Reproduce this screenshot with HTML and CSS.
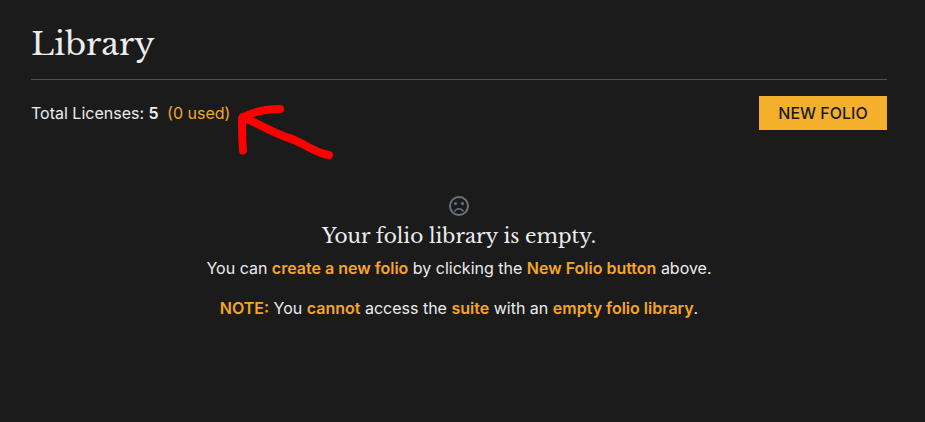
FILE: index.html
```html
<!DOCTYPE html>
<html lang="en">
<head>
<meta charset="utf-8">
<title>Library</title>
<link rel="stylesheet" href="styles.css">
</head>
<body>
<main class="page">
  <h1 class="title">Library</h1>
  <div class="toolbar">
    <p class="licenses">Total Licenses: <b>5</b> <span class="used">(0 used)</span></p>
    <button class="new-folio">NEW FOLIO</button>
  </div>
  <section class="empty">
    <svg class="face" viewBox="0 0 24 24" fill="currentColor" aria-hidden="true">
      <circle cx="12" cy="12" r="9" fill="none" stroke="currentColor" stroke-width="2"/>
      <circle cx="8.5" cy="9.5" r="1.5"/>
      <circle cx="15.5" cy="9.5" r="1.5"/>
      <path d="M12 14c-2.33 0-4.32 1.45-5.12 3.5h1.67c.69-1.19 1.97-2 3.45-2s2.75.81 3.45 2h1.67c-.8-2.05-2.79-3.5-5.12-3.5z"/>
    </svg>
    <h2 class="subtitle">Your folio library is empty.</h2>
    <p class="line">You can <b>create a new folio</b> by clicking the <b>New Folio button</b> above.</p>
    <p class="line note"><b>NOTE:</b> You <b>cannot</b> access the <b>suite</b> with an <b>empty folio library</b>.</p>
  </section>
</main>
<svg class="arrow" viewBox="230 95 110 70" aria-hidden="true">
  <path d="M243 150.500C242 140 242 128 242 118C252 112 264 109 280 109"/>
  <path d="M243 117C255 122 271 132 286 137C302 141 313 153 329 155"/>
</svg>
</body>
</html>
```
FILE: styles.css
```css
* { box-sizing: border-box; margin: 0; padding: 0; }
body {
  background: #1b1b1b;
  color: #ececec;
  font: 16px/24px Inter, "Liberation Sans", sans-serif;
}
.page { padding: 20px 38px 0 31px; }
.title {
  height: 60px;
  border-bottom: 1px solid #505050;
  font: 400 32px/48px "Libre Baskerville", "Liberation Serif", serif;
}
.toolbar {
  display: flex;
  justify-content: space-between;
  align-items: center;
  margin-top: 16px;
  height: 34px;
}
.used { margin-left: 4px; color: #f5a623; }
.licenses b { font-weight: 600; }
.new-folio {
  width: 128px;
  height: 34px;
  border: 0;
  background: #f5b02b;
  color: #1b1b1b;
  font: 500 16px/24px Inter, "Liberation Sans", sans-serif;
}
.empty {
  display: flex;
  flex-direction: column;
  align-items: center;
  margin-top: 64px;
  text-align: center;
}
.face { width: 24px; height: 24px; color: #6b7280; }
.subtitle {
  margin-top: 2px;
  font: 400 20px/32px "Libre Baskerville", "Liberation Serif", serif;
  white-space: nowrap;
}
.line { margin-top: 4px; white-space: nowrap; }
.note { margin-top: 16px; }
.line b { color: #f5a623; font-weight: 600; }
.arrow {
  position: absolute;
  left: 230px;
  top: 95px;
  width: 110px;
  height: 70px;
  fill: none;
  stroke: #f00;
  stroke-width: 8;
  stroke-linecap: round;
  stroke-linejoin: round;
}
```
